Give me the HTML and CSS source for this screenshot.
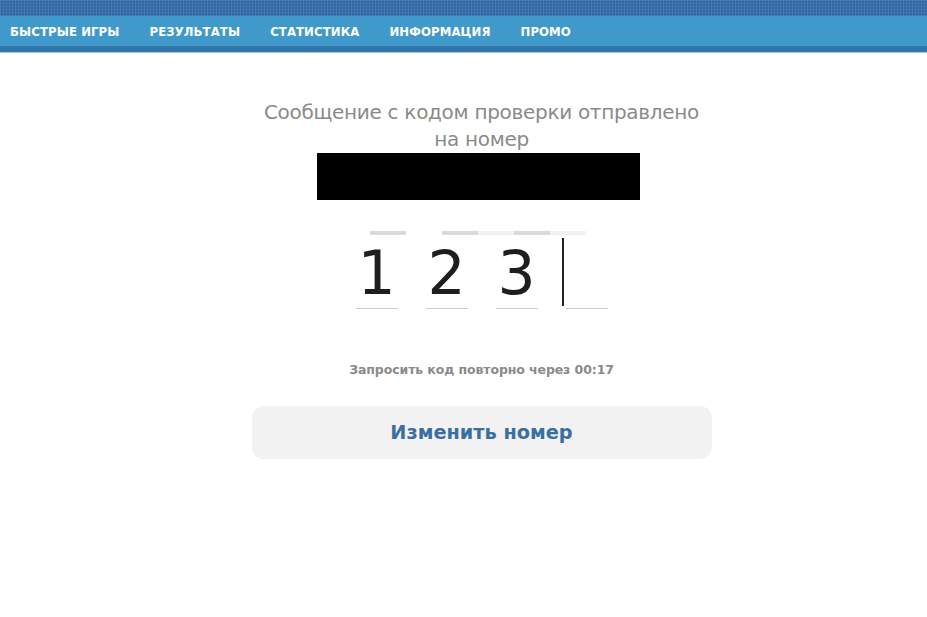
FILE: index.html
```html
<!DOCTYPE html>
<html lang="ru">
<head>
   <meta charset="UTF-8">
   <meta name="viewport" content="width=device-width, initial-scale=1.0">
   <title>Подтверждение номера</title>
   <link rel="stylesheet" href="styles.css">
</head>
<body>

   <div class="topbar"></div>
   <nav class="menu">
       <a href="#">БЫСТРЫЕ ИГРЫ</a>
       <a href="#">РЕЗУЛЬТАТЫ</a>
       <a href="#">СТАТИСТИКА</a>
       <a href="#">ИНФОРМАЦИЯ</a>
       <a href="#">ПРОМО</a>
   </nav>
   <div class="menu-bottom"></div>

   <div class="page">
       <div class="confirm">
           <p class="title">Сообщение с кодом проверки отправлено<br>на номер</p>
           <div class="phone-hidden"></div>

           <div class="code-bars">
               <span class="bar"></span>
               <span class="gap"></span>
               <span class="bar"></span>
               <span class="bar light"></span>
               <span class="bar"></span>
               <span class="bar light"></span>
           </div>

           <div class="code">
               <div class="cell">1</div>
               <div class="cell">2</div>
               <div class="cell">3</div>
               <div class="cell active"></div>
           </div>

           <p class="resend">Запросить код повторно через 00:17</p>

           <button class="change">Изменить номер</button>
       </div>
   </div>

</body>
</html>
```

FILE: styles.css
```css
body {
    margin: 0;
    background-color: #ffffff;
    font-family: "DejaVu Sans", Verdana, sans-serif;
}
.topbar {
    height: 16px;
    background-color: #2f69a5;
    background-image:
        repeating-linear-gradient(90deg, rgba(255,255,255,0.08) 0 1px, transparent 1px 3px),
        repeating-linear-gradient(0deg, rgba(255,255,255,0.08) 0 1px, transparent 1px 3px);
}
.menu {
    height: 30px;
    background-color: #3f9acb;
    display: flex;
    align-items: center;
    padding-left: 10px;
    gap: 30px;
}
.menu a {
    color: #ffffff;
    text-decoration: none;
    font-family: "DejaVu Sans Condensed", "Liberation Sans", sans-serif;
    font-size: 13px;
    font-weight: bold;
    letter-spacing: 0.1px;
}
.menu-bottom {
    height: 6px;
    background-color: #3474a6;
    border-bottom: 1px solid #a9c7dc;
}
.page {
    display: flex;
    justify-content: center;
    padding-left: 36px;
}
.confirm {
    width: 460px;
    display: flex;
    flex-direction: column;
    align-items: center;
}
.title {
    margin: 46px 0 0;
    font-size: 20px;
    line-height: 27px;
    color: #8a8a8a;
    text-align: center;
    letter-spacing: -0.3px;
}
.phone-hidden {
    width: 323px;
    height: 47px;
    background-color: #000000;
    margin-left: -7px;
}
.code-bars {
    display: flex;
    margin-top: 31px;
    margin-left: -8px;
    height: 4px;
}
.bar {
    width: 36px;
    background-color: #dadada;
}
.bar.light {
    background-color: #f1f1f1;
}
.gap {
    width: 36px;
}
.code {
    display: flex;
    gap: 28px;
    margin-top: 3px;
}
.cell {
    width: 42px;
    height: 70px;
    border-bottom: 1px solid #cccccc;
    font-size: 60px;
    line-height: 70px;
    text-align: center;
    color: #1e1e1e;
    position: relative;
}
.cell.active::before {
    content: "";
    position: absolute;
    left: -4px;
    top: 0;
    width: 2px;
    height: 68px;
    background-color: #222222;
}
.resend {
    margin: 53px 0 0;
    font-size: 12.5px;
    font-weight: bold;
    color: #8a8a8a;
    letter-spacing: -0.1px;
}
.change {
    width: 460px;
    height: 53px;
    margin-top: 29px;
    border: none;
    border-radius: 12px;
    background-color: #f2f2f2;
    color: #3b6fa0;
    font-family: "DejaVu Sans", Verdana, sans-serif;
    font-size: 19.3px;
    font-weight: bold;
    cursor: pointer;
}
```
